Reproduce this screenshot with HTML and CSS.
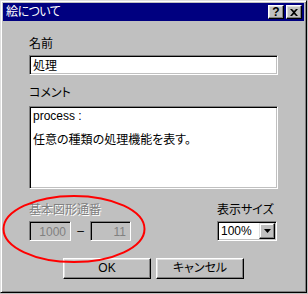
FILE: index.html
```html
<!DOCTYPE html>
<html lang="ja">
<head>
<meta charset="utf-8">
<link rel="stylesheet" href="styles.css">
</head>
<body>
<div class="dialog">
  <div class="titlebar">
    <span class="title">絵について</span>
    <span class="tbtn help">?</span>
    <span class="tbtn close"><svg width="8" height="7" viewBox="0 0 8 7"><path d="M0 0h2l2 2 2-2h2v0L5 3.5 8 7H6L4 5 2 7H0l3-3.5Z" fill="#000"/></svg></span>
  </div>
  <div class="content">
    <div class="label first">名前</div>
    <div class="field name">処理</div>
    <div class="label second">コメント</div>
    <div class="field memo"><div>process :</div><div>&nbsp;</div><div>任意の種類の処理機能を表す。</div></div>
    <div class="lower">
      <div class="serial">
        <div class="label disabled">基本図形通番</div>
        <div class="serial-row">
          <div class="field num n1">1000</div>
          <span class="dash">–</span>
          <div class="field num n2">11</div>
        </div>
      </div>
      <div class="size">
        <div class="label">表示サイズ</div>
        <div class="combo">
          <span class="combo-text">100%</span>
          <span class="combo-btn"><svg width="7" height="4" viewBox="0 0 7 4"><path d="M0 0h7L3.5 4Z" fill="#000"/></svg></span>
        </div>
      </div>
    </div>
    <div class="buttons">
      <div class="btn ok">OK</div>
      <div class="btn cancel">キャンセル</div>
    </div>
  </div>
  <svg class="mark" width="148" height="72" viewBox="0 0 148 72"><ellipse cx="73" cy="36" rx="70.5" ry="33" fill="none" stroke="#f00" stroke-width="2"/></svg>
</div>
</body>
</html>
```

FILE: styles.css
```css
html, body {
  margin: 0;
  padding: 0;
  background: #c0c0c0;
}
body {
  font-family: "Liberation Sans", "Noto Sans CJK JP", sans-serif;
  font-size: 12px;
  font-feature-settings: "palt";
  color: #000;
}
.dialog {
  position: relative;
  box-sizing: border-box;
  width: 307px;
  height: 293px;
  background: #c0c0c0;
  border: 1px solid;
  border-color: #dfdfdf #000 #000 #dfdfdf;
  box-shadow: inset 1px 1px #fff, inset -1px -1px #808080;
  padding: 2px;
}
.titlebar {
  height: 18px;
  background: #000080;
  display: flex;
  align-items: center;
  padding: 0 2px 0 3px;
  gap: 2px;
}
.title {
  flex: 1;
  color: #fff;
  font-size: 12px;
  line-height: 14px;
  letter-spacing: -0.5px;
}
.tbtn {
  box-sizing: border-box;
  width: 16px;
  height: 14px;
  background: #c0c0c0;
  border: 1px solid;
  border-color: #fff #000 #000 #fff;
  box-shadow: inset -1px -1px #808080, inset 1px 1px #dfdfdf;
  display: flex;
  align-items: center;
  justify-content: center;
}
.help {
  font-family: "Liberation Sans", sans-serif;
  font-weight: bold;
  font-size: 12px;
  line-height: 12px;
}
.content {
  padding: 0 26px;
}
.label {
  line-height: 14px;
  height: 14px;
}
.label.first { margin-top: 16px; }
.label.second { margin-top: 11px; }
.label.disabled {
  color: #808080;
  text-shadow: 1px 1px #fff;
}
.field {
  box-sizing: border-box;
  background: #fff;
  border: 1px solid;
  border-color: #808080 #fff #fff #808080;
  box-shadow: inset 1px 1px #000, inset -1px -1px #c0c0c0;
}
.name {
  margin-top: 4px;
  height: 20px;
  padding: 3px 3px;
  line-height: 14px;
}
.memo {
  margin-top: 6px;
  height: 83px;
  padding: 3px 3px;
  line-height: 12px;
}
.lower {
  display: flex;
  justify-content: space-between;
  margin-top: 14px;
  padding-right: 1px;
}
.serial-row {
  display: flex;
  align-items: center;
  margin-top: 4px;
}
.num {
  height: 20px;
  background: #c0c0c0;
  color: #808080;
  text-align: right;
  padding: 3px 4px;
  line-height: 14px;
}
.n1 { width: 42px; }
.n2 { width: 41px; }
.dash {
  width: 19px;
  text-align: center;
  line-height: 14px;
}
.size {
  width: 60px;
}
.combo {
  box-sizing: border-box;
  margin-top: 4px;
  height: 20px;
  background: #fff;
  border: 1px solid;
  border-color: #808080 #fff #fff #808080;
  box-shadow: inset 1px 1px #000, inset -1px -1px #c0c0c0;
  padding: 1px;
  display: flex;
}
.combo-text {
  flex: 1;
  padding-left: 2px;
  line-height: 16px;
}
.combo-btn {
  box-sizing: border-box;
  width: 16px;
  height: 16px;
  background: #c0c0c0;
  border: 1px solid;
  border-color: #dfdfdf #000 #000 #dfdfdf;
  box-shadow: inset -1px -1px #808080, inset 1px 1px #fff;
  display: flex;
  align-items: center;
  justify-content: center;
}
.buttons {
  display: flex;
  justify-content: center;
  gap: 5px;
  margin-top: 17px;
}
.btn {
  box-sizing: border-box;
  width: 88px;
  height: 21px;
  border: 1px solid;
  border-color: #fff #000 #000 #fff;
  box-shadow: inset -1px -1px #808080, inset 1px 1px #dfdfdf;
  text-align: center;
  line-height: 19px;
}
.mark {
  position: absolute;
  left: 0;
  top: 192px;
}
```
